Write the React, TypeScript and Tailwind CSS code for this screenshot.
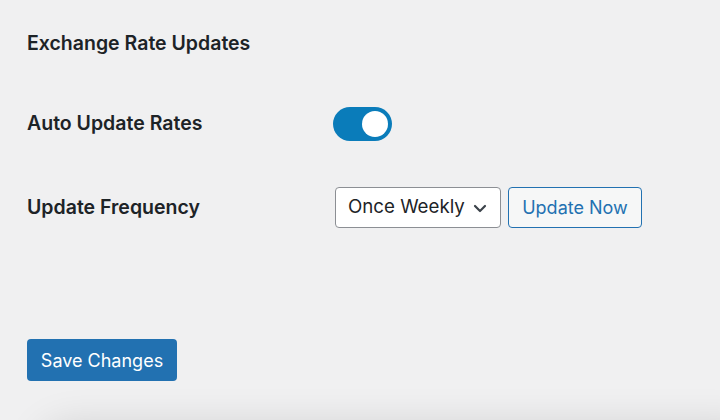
import React, { useState } from 'react';

export default function App() {
    const [auto, setAuto] = useState(true);

    return (
        <div className="relative w-[720px] h-[420px] overflow-hidden bg-[#f0f0f1] text-[#1d2327] font-['Inter','Liberation_Sans',sans-serif]">
            <div className="pl-[27px] pt-[31px]">
                <h2 className="text-[19.5px] font-semibold leading-[24px]">Exchange Rate Updates</h2>

                <div className="mt-[52px] flex flex-col gap-[46px]">
                    {/* Auto update toggle */}
                    <div className="flex items-center h-[34px]">
                        <label className="w-[306px] text-[19.5px] font-semibold">Auto Update Rates</label>
                        <button
                            onClick={() => setAuto(!auto)}
                            className={`w-[59px] h-[34px] rounded-full flex items-center px-[4px] ${auto ? 'bg-[#0a7cba] justify-end' : 'bg-[#c3c4c7] justify-start'}`}
                        >
                            <span className="w-[26px] h-[26px] rounded-full bg-white" />
                        </button>
                    </div>

                    {/* Frequency */}
                    <div className="flex items-center h-[41px]">
                        <label className="w-[308px] text-[19.5px] font-semibold">Update Frequency</label>
                        <div className="flex items-center gap-[7px]">
                            <div className="w-[166px] h-[41px] bg-white border border-[#8c8f94] rounded-[4px] flex items-center justify-between pl-[12px] pr-[12px] text-[18.7px]">
                                <span>Once Weekly</span>
                                <svg width="16" height="16" viewBox="0 0 16 16" fill="none" stroke="#3c434a" strokeWidth="2.2" strokeLinecap="round" strokeLinejoin="round">
                                    <path d="M3 6l5 5 5-5" />
                                </svg>
                            </div>
                            <button className="w-[134px] h-[41px] border border-[#2271b1] bg-[#f6f7f7] text-[#2271b1] rounded-[4px] text-[18px]">
                                Update Now
                            </button>
                        </div>
                    </div>
                </div>

                <button className="mt-[111px] w-[150px] h-[42px] bg-[#2271b1] text-white rounded-[4px] text-[18px]">
                    Save Changes
                </button>
            </div>

            {/* shadow of the panel below, source kept out of view */}
            <div className="absolute left-[40px] right-[-40px] bottom-[-70px] h-[60px] rounded-[30px] bg-[#f0f0f1] shadow-[0_-4px_40px_rgba(0,0,0,0.14)]" />
        </div>
    );
}
